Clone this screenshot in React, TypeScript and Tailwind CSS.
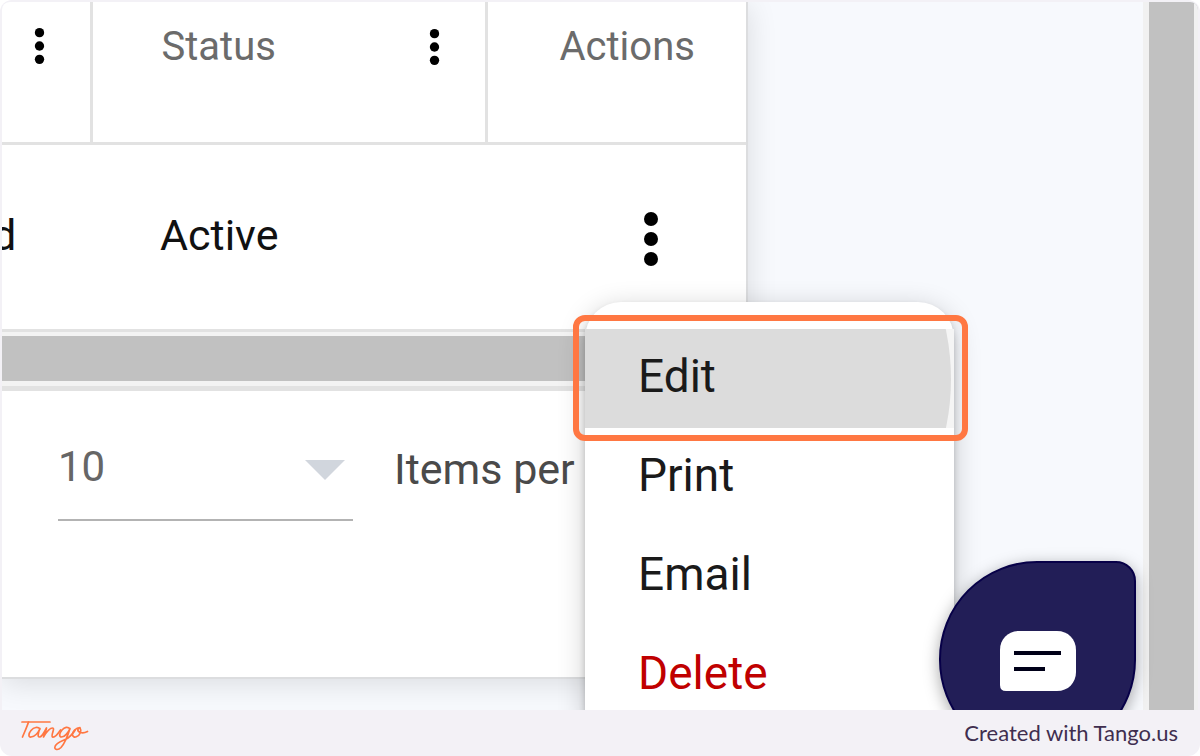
import React, { FC } from "react";

type TypeMenuItem = {
    label: string;
    danger?: boolean;
    active?: boolean;
};

const menuItems: TypeMenuItem[] = [
    { label: "Edit", active: true },
    { label: "Print" },
    { label: "Email" },
    { label: "Delete", danger: true },
];

const Dots: FC<{ className: string }> = ({ className }) => (
    <svg viewBox="0 0 14 54" className={className} fill="#000" aria-hidden="true">
        <circle cx="7" cy="7" r="7" />
        <circle cx="7" cy="27" r="7" />
        <circle cx="7" cy="47" r="7" />
    </svg>
);

const DataTable: FC = () => (
    <table className="w-full table-fixed border-collapse text-left">
        <colgroup>
            <col className="w-[89px]" />
            <col />
            <col className="w-[260px]" />
        </colgroup>
        <thead>
            <tr className="h-[141px] border-b-[3px] border-[#e2e2e2] align-top text-[40px] leading-[48px] text-[#6b6b6b]">
                <th className="border-r-[3px] border-[#e2e2e2] pt-[26px] pl-8 font-normal">
                    <button aria-label="Column options" className="block">
                        <Dots className="h-[36px] w-[11px]" />
                    </button>
                </th>
                <th className="border-r-[3px] border-[#e2e2e2] pt-[21px] pr-[45px] pl-[69px] font-normal">
                    <div className="flex items-center justify-between">
                        Status
                        <button aria-label="Status column options">
                            <Dots className="h-[36px] w-[11px]" />
                        </button>
                    </div>
                </th>
                <th className="pt-[21px] pl-[72px] font-normal">Actions</th>
            </tr>
        </thead>
        <tbody>
            <tr className="h-[186px] text-[43px] leading-[48px] text-[#111]">
                <td className="overflow-hidden pb-1">
                    <span className="-ml-2.5 block">d</span>
                </td>
                <td className="pb-1 pl-[69px]">Active</td>
                <td className="pl-[158px]">
                    <button aria-label="Row actions" className="mt-1 block">
                        <Dots className="h-[54px] w-[14px]" />
                    </button>
                </td>
            </tr>
        </tbody>
    </table>
);

const Pager: FC = () => (
    <div className="flex flex-1 items-start pt-12 pl-14 whitespace-nowrap">
        <div className="relative w-[295px] border-b-2 border-[#b3b3b3] pb-6">
            <select
                id="page-size"
                defaultValue="10"
                className="block h-14 w-full appearance-none bg-transparent text-[42px] leading-[56px] text-[#666]"
            >
                <option>10</option>
                <option>25</option>
                <option>50</option>
            </select>
            <svg viewBox="0 0 40 20" className="pointer-events-none absolute top-[21px] right-2 h-5 w-10" fill="#d1d6dd">
                <path d="M0 0H40L20 20Z" />
            </svg>
        </div>
        <label htmlFor="page-size" className="pt-0.5 pl-[41px] text-[43px] leading-[56px] text-[#4a4a4a]">
            Items per
        </label>
    </div>
);

const ActionMenu: FC = () => (
    <div className="absolute top-[300px] right-[244px] w-[369px] rounded-t-[36px] bg-white pt-[27px] shadow-[0_6px_28px_rgba(0,0,0,0.2),0_4px_6px_rgba(0,0,0,0.2)]">
        {menuItems.map((item) => (
            <button
                key={item.label}
                className={`relative block h-[99px] w-full overflow-hidden pb-1.5 pl-[53px] text-left text-[46px] leading-[56px] ${
                    item.danger ? "text-[#c00000]" : "text-[#1a1a1a]"
                } ${item.active ? "bg-[#f5f5f5]" : ""}`}
            >
                {item.active && (
                    <span className="absolute top-1/2 right-[3px] size-[480px] -translate-y-1/2 rounded-full bg-[#dcdcdc]" />
                )}
                <span className="relative">{item.label}</span>
            </button>
        ))}
        {/* highlight around the first item */}
        <div className="pointer-events-none absolute top-[13px] -right-[14px] -left-3 h-[126px] rounded-xl border-6 border-[#ff7742]" />
    </div>
);

const ChatButton: FC = () => (
    <button
        aria-label="Open chat"
        className="absolute top-[559px] right-[62px] flex size-[197px] items-center justify-center rounded-[98px] rounded-tr-[20px] border-2 border-[#070048] bg-[#221e57] pt-0.5 shadow-[0_4px_16px_rgba(0,0,0,0.35)]"
    >
        <svg viewBox="0 0 76 60" className="h-[60px] w-[76px]">
            <path
                d="M19 0H57C68 0 76 8 76 19V41C76 52 68 60 57 60H6Q0 60 0 54V19C0 8 8 0 19 0Z"
                fill="#fff"
            />
            <path d="M14 22H61M14 38H45" stroke="#000018" strokeWidth="4" />
        </svg>
    </button>
);

const TangoLogo: FC = () => (
    <svg
        viewBox="0 0 70 32"
        className="mt-1.5 h-8 w-[70px]"
        fill="none"
        stroke="#ff7742"
        strokeWidth="1.7"
        strokeLinecap="round"
        strokeLinejoin="round"
        role="img"
        aria-label="Tango"
    >
        <path d="M2 2H30" />
        <path d="M8.500 2C7 7 4.500 12 2.500 17" />
        <path d="M20 9C18 6.500 14 7 11 10.500C8 14 8.500 17.500 11 17C15 16.500 18.500 12 20 8.500C18.500 12 17 17 19.500 17C22 17 24.500 12 26.500 8C26 11 24.500 14.500 23.500 17C26.500 12 30 8 32.500 8C35.500 8 30.500 15.500 32.500 17C35 18 38.500 13 40.500 10" />
        <path d="M50 9C48 6.500 44.500 7 42 10C39 13.500 39 17 41.500 17C45 17 48.500 12 50 8.500C48 15 45 23 41 27.500C38 30.500 34 30 35 26.500C36 22 44 20.500 48 18C51 16 53 13 55 10.500" />
        <path d="M60 7.500C56 7.500 52 12 52.500 15C53.500 19 59 16.500 60.500 12.500C61.500 9 59.500 6.500 58 9C57 12 62 14.500 67.500 11.500" />
    </svg>
);

const App: FC = () => {
    return (
        <div className="flex min-h-screen flex-col overflow-hidden rounded-xl bg-[#f3f1f6] px-0.5 pt-0.5 font-[Roboto,sans-serif]">
            <main className="relative flex flex-1 overflow-hidden rounded-t-lg bg-[#f7f9fd]">
                <section className="mb-[31px] flex min-w-0 flex-1 flex-col border-r-2 border-b-2 border-[#dcdddf] bg-white shadow-[0_4px_28px_rgba(0,0,0,0.12)]">
                    <DataTable />
                    <div className="border-t-[3px] border-b-[5px] border-[#e2e2e2] bg-[#f3f3f3] pt-1 pb-[5px]">
                        <div className="h-[45px] bg-[#c1c1c1]" />
                    </div>
                    <Pager />
                </section>
                <div className="w-[395px] shrink-0" />
                <div className="w-[55px] shrink-0 border-r-4 border-l-6 border-[#f1f1f1] bg-[#c1c1c1]" />
                <ActionMenu />
                <ChatButton />
            </main>
            <footer className="flex h-[46px] shrink-0 items-center justify-between pr-5 pl-[18px]">
                <TangoLogo />
                <a href="#" className="font-[Lato,sans-serif] text-[22px] leading-6 text-[#3f2e4f]">
                    Created with Tango.us
                </a>
            </footer>
        </div>
    );
};

export default App;
